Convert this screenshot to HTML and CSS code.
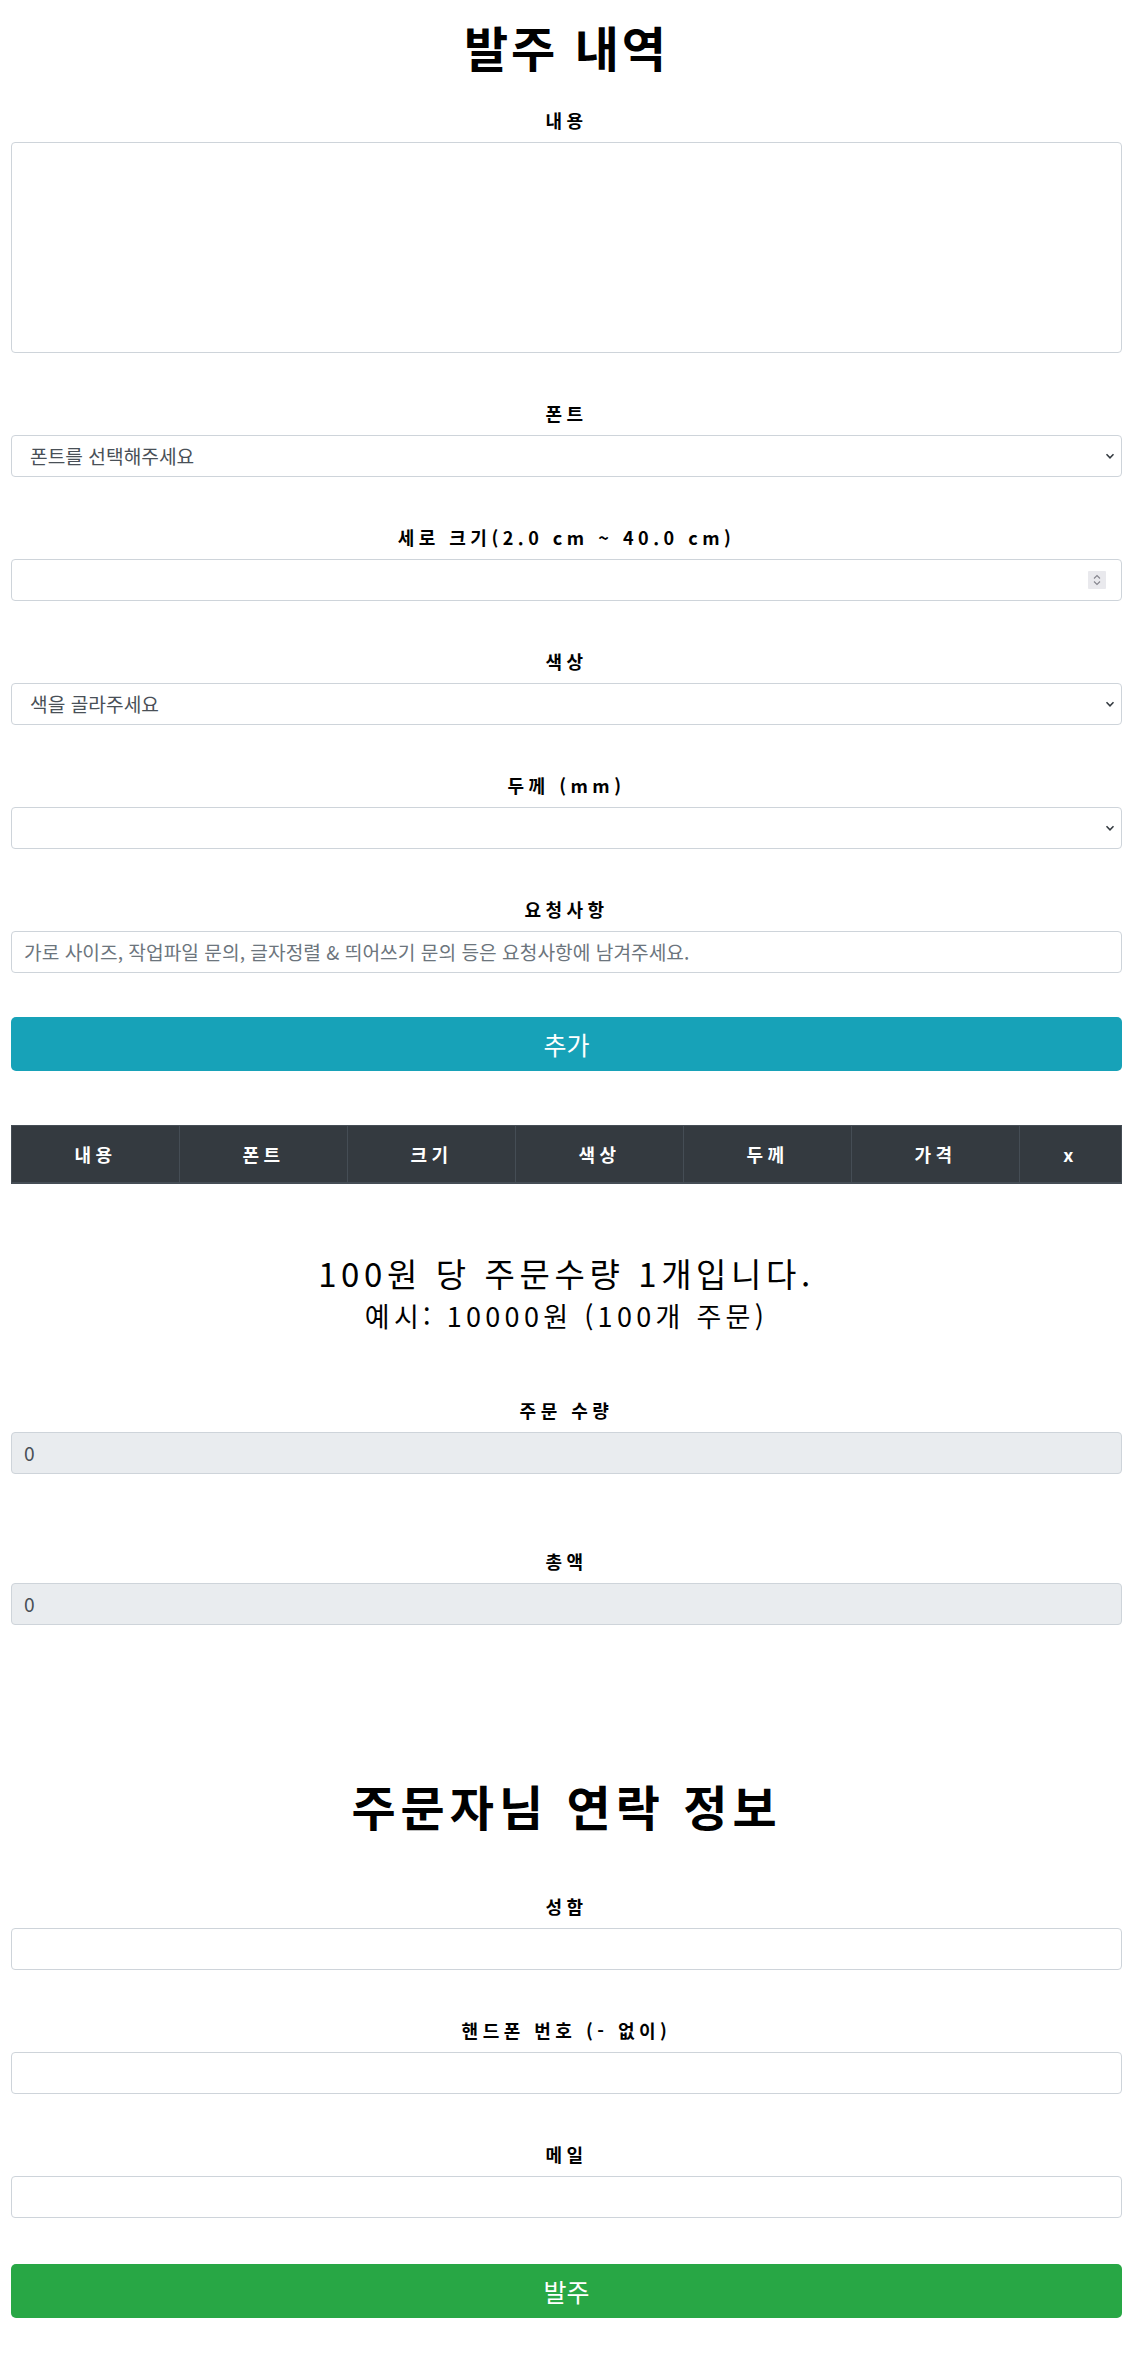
FILE: index.html
```html
<!DOCTYPE html>
<html lang="ko">
<head>
<meta charset="utf-8">
<title>발주 내역</title>
<link rel="stylesheet" href="styles.css">
</head>
<body>
<div class="page">
  <h1 class="title title-order">발주 내역</h1>

  <div class="group">
    <label class="label">내용</label>
    <textarea class="control textarea"></textarea>
  </div>

  <div class="group">
    <label class="label">폰트</label>
    <div class="select-wrap">
      <select class="control select"><option>폰트를 선택해주세요</option></select>
      <svg class="chev" width="10" height="8" viewBox="0 0 10 8"><path d="M1.5 2.2 L5 5.8 L8.5 2.2" fill="none" stroke="#343a40" stroke-width="1.5"/></svg>
    </div>
  </div>

  <div class="group">
    <label class="label">세로 크기(2.0 cm ~ 40.0 cm)</label>
    <div class="select-wrap">
      <input class="control number" type="number">
      <svg class="spin" width="18" height="18" viewBox="0 0 18 18"><rect x="0" y="0" width="18" height="18" rx="1" fill="#e9e9ed"/><path d="M6 7.5 L9 4.5 L12 7.5" fill="none" stroke="#85858d" stroke-width="1.1"/><path d="M6 10.5 L9 13.5 L12 10.5" fill="none" stroke="#85858d" stroke-width="1.1"/></svg>
    </div>
  </div>

  <div class="group">
    <label class="label">색상</label>
    <div class="select-wrap">
      <select class="control select"><option>색을 골라주세요</option></select>
      <svg class="chev" width="10" height="8" viewBox="0 0 10 8"><path d="M1.5 2.2 L5 5.8 L8.5 2.2" fill="none" stroke="#343a40" stroke-width="1.5"/></svg>
    </div>
  </div>

  <div class="group">
    <label class="label">두께 (mm)</label>
    <div class="select-wrap">
      <select class="control select"><option></option></select>
      <svg class="chev" width="10" height="8" viewBox="0 0 10 8"><path d="M1.5 2.2 L5 5.8 L8.5 2.2" fill="none" stroke="#343a40" stroke-width="1.5"/></svg>
    </div>
  </div>

  <div class="group group-end-1">
    <label class="label">요청사항</label>
    <input class="control" type="text" placeholder="가로 사이즈, 작업파일 문의, 글자정렬 &amp; 띄어쓰기 문의 등은 요청사항에 남겨주세요.">
  </div>

  <button class="btn btn-info" type="button">추가</button>

  <table class="table">
    <thead>
      <tr>
        <th class="col">내용</th>
        <th class="col">폰트</th>
        <th class="col">크기</th>
        <th class="col">색상</th>
        <th class="col">두께</th>
        <th class="col">가격</th>
        <th class="col-x">x</th>
      </tr>
    </thead>
  </table>

  <div class="info">
    <h3 class="info-main">100원 당 주문수량 1개입니다.</h3>
    <h4 class="info-sub">예시: 10000원 (100개 주문)</h4>
  </div>

  <div class="group group-qty">
    <label class="label">주문 수량</label>
    <input class="control" type="text" value="0" disabled>
  </div>

  <div class="group group-total">
    <label class="label">총액</label>
    <input class="control" type="text" value="0" disabled>
  </div>

  <h1 class="title title-contact">주문자님 연락 정보</h1>

  <div class="group">
    <label class="label">성함</label>
    <input class="control" type="text">
  </div>

  <div class="group">
    <label class="label">핸드폰 번호 (- 없이)</label>
    <input class="control" type="text">
  </div>

  <div class="group group-end-2">
    <label class="label">메일</label>
    <input class="control" type="text">
  </div>

  <button class="btn btn-success" type="button">발주</button>
</div>
</body>
</html>
```

FILE: styles.css
```css
* { box-sizing: border-box; }

html, body {
  margin: 0;
  padding: 0;
  background: #ffffff;
}

body {
  font-family: "Noto Sans CJK KR", "Noto Sans", sans-serif;
  color: #000000;
}

.page {
  padding: 17px 11px 41px 11px;
}

.title {
  margin: 0;
  text-align: center;
  font-size: 48px;
  line-height: 58px;
  font-weight: 700;
}

.title-order {
  margin-bottom: 33px;
  letter-spacing: 3px;
}

.title-contact {
  margin-bottom: 60px;
  letter-spacing: 5px;
}

.group {
  display: flex;
  flex-direction: column;
  margin-bottom: 48px;
}

.group-end-1 {
  margin-bottom: 44px;
}

.group-end-2 {
  margin-bottom: 46px;
}

.label {
  display: block;
  text-align: center;
  font-size: 18px;
  line-height: 24px;
  font-weight: 700;
  letter-spacing: 4.5px;
  margin-bottom: 10px;
}

.control {
  display: block;
  width: 100%;
  height: 42px;
  padding: 5px 12px;
  font-family: "Noto Sans CJK KR", "Noto Sans", sans-serif;
  font-size: 19.2px;
  line-height: 28px;
  color: #495057;
  background: #ffffff;
  border: 1px solid #ced4da;
  border-radius: 4px;
  outline: none;
}

.control::placeholder {
  color: #6c757d;
}

.control:disabled {
  background: #e9ecef;
}

.textarea {
  height: 211px;
  resize: none;
}

.select-wrap {
  position: relative;
}

.select {
  appearance: none;
  -webkit-appearance: none;
  padding-left: 18px;
  padding-right: 30px;
}

.number {
  -moz-appearance: textfield;
}

.number::-webkit-inner-spin-button,
.number::-webkit-outer-spin-button {
  -webkit-appearance: none;
  margin: 0;
}

.chev {
  position: absolute;
  right: 7px;
  top: 17px;
}

.spin {
  position: absolute;
  right: 16px;
  top: 12px;
}

.btn {
  display: block;
  width: 100%;
  height: 54px;
  border: 0;
  border-radius: 5px;
  color: #ffffff;
  font-family: "Noto Sans CJK KR", "Noto Sans", sans-serif;
  font-size: 25px;
  line-height: 30px;
  text-align: center;
}

.btn-info {
  background: #17a2b8;
  margin-bottom: 54px;
}

.btn-success {
  background: #28a745;
}

.table {
  width: 100%;
  border-collapse: collapse;
  margin-bottom: 67px;
}

.table th {
  background: #343a40;
  color: #ffffff;
  border: 1px solid #454d55;
  border-bottom: 2px solid #454d55;
  height: 57px;
  padding: 0;
  font-size: 18px;
  font-weight: 700;
  letter-spacing: 4.5px;
  text-align: center;
}

.col { width: 168px; }

.col-x {
  width: auto;
  font-size: 20px;
}

.info {
  text-align: center;
  margin-bottom: 61px;
}

.info-main {
  margin: 0;
  font-size: 33px;
  line-height: 44px;
  font-weight: 400;
  letter-spacing: 4.6px;
}

.info-sub {
  margin: 0;
  font-size: 27px;
  line-height: 42px;
  font-weight: 400;
  letter-spacing: 4.3px;
}

.group-qty {
  margin-bottom: 75px;
}

.group-total {
  margin-bottom: 151px;
}
```
